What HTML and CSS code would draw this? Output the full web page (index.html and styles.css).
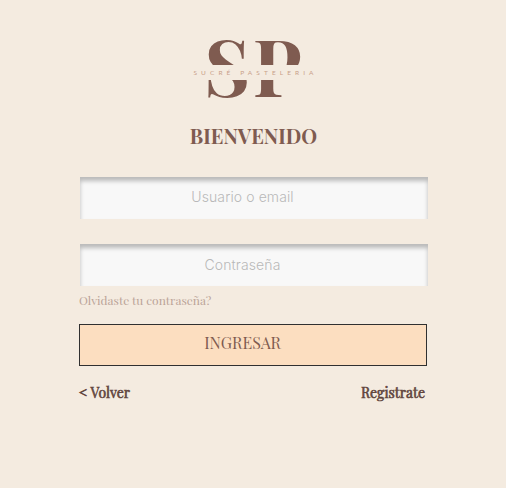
FILE: index.html
```
<!DOCTYPE html>
<html lang="es">
<head>
<meta charset="utf-8">
<title>Sucré Pastelería</title>
<link rel="stylesheet" href="styles.css">
</head>
<body>
<main class="login">
  <svg class="logo" width="126" height="66" viewBox="0 0 126 66" role="img" aria-label="Sucré Pasteleria">
    <g class="monogram">
      <text x="13" y="61" textLength="46" lengthAdjust="spacingAndGlyphs">S</text>
      <text x="61.8" y="61" textLength="49" lengthAdjust="spacingAndGlyphs">P</text>
    </g>
    <rect class="band" y="29" width="126" height="15"/>
    <text class="brand" x="2.5" y="39.3" textLength="120">SUCRÉ PASTELERIA</text>
  </svg>
  <h1 class="title">BIENVENIDO</h1>
  <form class="form">
    <input class="field" type="text" placeholder="Usuario o email" aria-label="Usuario o email">
    <input class="field field-password" type="password" placeholder="Contraseña" aria-label="Contraseña">
    <a class="forgot">Olvidaste tu contraseña?</a>
    <button class="submit" type="button"><span class="submit-label">INGRESAR</span></button>
  </form>
  <nav class="links">
    <a class="back">&lt; Volver</a>
    <a class="register">Registrate</a>
  </nav>
</main>
</body>
</html>
```
FILE: styles.css
```
* { box-sizing: border-box; }
body {
  margin: 0;
  min-height: 488px;
  background: #f4ebe0;
  color: #7f5b50;
  font-family: "Playfair Display", "Liberation Serif", serif;
}
.login {
  width: 349px;
  margin-left: 79px;
  padding-top: 36px;
  display: flex;
  flex-direction: column;
}
.logo { display: block; margin-left: 112px; overflow: visible; }
.monogram { fill: #7f5b50; font-size: 78px; font-weight: 700; }
.band { fill: #f4ebe0; }
.brand { fill: #c99f89; font-family: Lato, "Liberation Sans", sans-serif; font-size: 6.5px; }
.title {
  margin: 19px 0 0;
  height: 30px;
  line-height: 30px;
  font-size: 20px;
  font-weight: 700;
  text-align: center;
}
.form { display: flex; flex-direction: column; margin-top: 26px; }
.field {
  width: 348px;
  height: 42px;
  margin-left: 1px;
  border: 0;
  padding: 0 23px 3px 0;
  background: #f8f8f8;
  box-shadow: inset 0 4px 4px rgba(0, 0, 0, 0.25);
  font-family: Inter, sans-serif;
  font-size: 14px;
  font-weight: 300;
  letter-spacing: 0.1px;
  text-align: center;
}
.field::placeholder { color: #b8b8b8; opacity: 1; }
.field-password { margin-top: 25px; padding-bottom: 1px; }
.forgot {
  height: 16px;
  margin-top: 6px;
  line-height: 16px;
  font-size: 12px;
  color: #bba498;
}
.submit {
  width: 348px;
  height: 42px;
  margin-top: 16px;
  padding: 0 21px 5px 0;
  border: 1px solid #303030;
  background: #fcdec0;
  color: #7f5b50;
  font-family: inherit;
  font-size: 16px;
}
.links {
  width: 346px;
  height: 20px;
  margin-top: 17px;
  display: flex;
  justify-content: space-between;
  line-height: 20px;
  font-size: 14px;
  color: #62463e;
  -webkit-text-stroke: 0.6px #62463e;
}
```
